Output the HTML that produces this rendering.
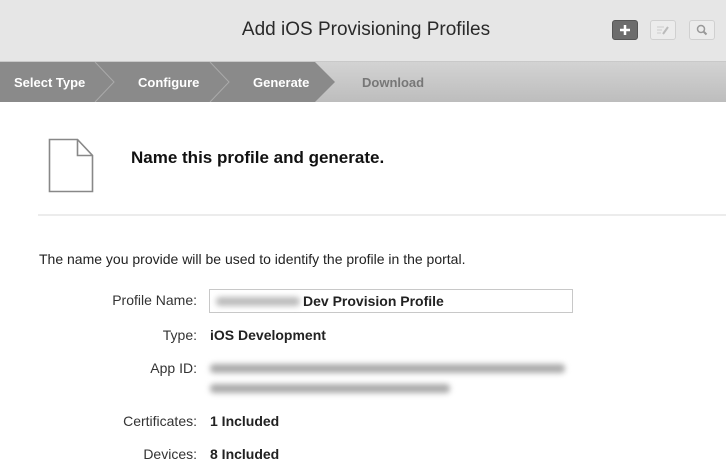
<!DOCTYPE html>
<html><head><style>
body{margin:0;width:726px;height:476px;overflow:hidden;background:#fff;font-family:"Liberation Sans",sans-serif;position:relative}
.hdr{position:absolute;left:0;top:0;width:726px;height:61px;background:#e6e6e6;border-bottom:1px solid #c9c9c9}
.title{position:absolute;left:0;width:732px;top:19px;text-align:center;font-size:19px;color:#2a2a2a}
.btn{position:absolute;top:20px;width:26px;height:20px;border:1px solid #d0d0d0;border-radius:3px;background:#ececec;box-sizing:border-box}
.crumb{position:absolute;left:0;top:62px;width:726px;height:40px;background:linear-gradient(#d3d3d3,#bdbdbd)}
.c{position:absolute;top:13px;font-size:13px;color:#fff;font-weight:bold}
.lbl{position:absolute;right:529px;font-size:14px;color:#333;text-align:right}
.val{position:absolute;left:210px;font-size:14px;color:#222;font-weight:bold}
.blur{position:absolute;height:9px;background:#aaa;filter:blur(3px);border-radius:4px}
</style></head><body>
<div class="hdr"><div class="title">Add iOS Provisioning Profiles</div>
<div class="btn" style="left:612px;background:#6c6c6c;border-color:#555"><svg width="24" height="18"><path d="M12 4v10M7 9h10" stroke="#fff" stroke-width="2.5"/></svg></div>
<div class="btn" style="left:650px"><svg width="24" height="18"><path d="M6 6h7M6 9h5M6 12h4" stroke="#ccc"/><path d="M12 13l5-7" stroke="#bbb" stroke-width="2"/></svg></div>
<div class="btn" style="left:689px"><svg width="24" height="18"><circle cx="11" cy="8" r="3.5" stroke="#999" stroke-width="1.5" fill="none"/><path d="M13.5 10.5l3 3" stroke="#999" stroke-width="2"/></svg></div>
</div>
<div class="crumb">
<svg width="726" height="40" style="position:absolute;left:0;top:0">
<polygon points="0,0 315,0 335,20 315,40 0,40" fill="#8a8a8a"/>
<polyline points="95,0 114,20 95,40" stroke="#aaa" fill="none"/>
<polyline points="210,0 229,20 210,40" stroke="#aaa" fill="none"/>
</svg>
<div class="c" style="left:14px">Select Type</div>
<div class="c" style="left:138px">Configure</div>
<div class="c" style="left:253px">Generate</div>
<div class="c" style="left:362px;color:#777">Download</div>
</div>
<svg style="position:absolute;left:48px;top:138px" width="48" height="56"><path d="M1.5 1.5h28l15 16v36h-43z M29.5 1.5v16h15" stroke="#888" stroke-width="1.6" fill="#fff"/></svg>
<div style="position:absolute;left:131px;top:148px;font-size:17px;font-weight:bold;color:#111">Name this profile and generate.</div>
<div style="position:absolute;left:38px;top:214px;width:688px;height:2px;background:#ececec"></div>
<div style="position:absolute;left:39px;top:251px;font-size:14px;color:#222">The name you provide will be used to identify the profile in the portal.</div>
<div class="lbl" style="top:292px">Profile Name:</div>
<div style="position:absolute;left:209px;top:289px;width:364px;height:24px;border:1px solid #c8c8c8;box-sizing:border-box"></div>
<div class="blur" style="left:216px;top:297px;width:84px;background:#bbb"></div>
<div class="val" style="top:293px;left:303px">Dev Provision Profile</div>
<div class="lbl" style="top:327px">Type:</div><div class="val" style="top:327px">iOS Development</div>
<div class="lbl" style="top:360px">App ID:</div>
<div class="blur" style="left:210px;top:364px;width:355px"></div>
<div class="blur" style="left:210px;top:384px;width:240px"></div>
<div class="lbl" style="top:413px">Certificates:</div><div class="val" style="top:413px">1 Included</div>
<div class="lbl" style="top:446px">Devices:</div><div class="val" style="top:446px">8 Included</div>
</body></html>
